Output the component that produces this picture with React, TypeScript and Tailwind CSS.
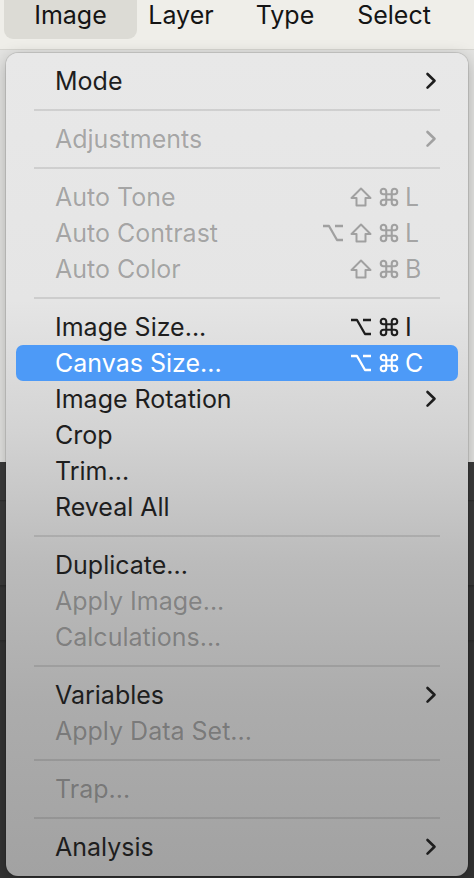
import React from 'react';
import { Command } from 'lucide-react';

type Item =
  | { kind: 'sep' }
  | {
      kind: 'item';
      label: string;
      disabled?: boolean;
      active?: boolean;
      submenu?: boolean;
      keys?: string[];
      letter?: string;
    };

const menu: Item[] = [
  { kind: 'item', label: 'Mode', submenu: true },
  { kind: 'sep' },
  { kind: 'item', label: 'Adjustments', submenu: true, disabled: true },
  { kind: 'sep' },
  { kind: 'item', label: 'Auto Tone', disabled: true, keys: ['shift', 'cmd'], letter: 'L' },
  { kind: 'item', label: 'Auto Contrast', disabled: true, keys: ['opt', 'shift', 'cmd'], letter: 'L' },
  { kind: 'item', label: 'Auto Color', disabled: true, keys: ['shift', 'cmd'], letter: 'B' },
  { kind: 'sep' },
  { kind: 'item', label: 'Image Size...', keys: ['opt', 'cmd'], letter: 'I' },
  { kind: 'item', label: 'Canvas Size...', active: true, keys: ['opt', 'cmd'], letter: 'C' },
  { kind: 'item', label: 'Image Rotation', submenu: true },
  { kind: 'item', label: 'Crop' },
  { kind: 'item', label: 'Trim...' },
  { kind: 'item', label: 'Reveal All' },
  { kind: 'sep' },
  { kind: 'item', label: 'Duplicate...' },
  { kind: 'item', label: 'Apply Image...', disabled: true },
  { kind: 'item', label: 'Calculations...', disabled: true },
  { kind: 'sep' },
  { kind: 'item', label: 'Variables', submenu: true },
  { kind: 'item', label: 'Apply Data Set...', disabled: true },
  { kind: 'sep' },
  { kind: 'item', label: 'Trap...', disabled: true },
  { kind: 'sep' },
  { kind: 'item', label: 'Analysis', submenu: true },
];

const Chevron = () => (
  <svg width="14" height="20" viewBox="0 0 14 20" className="mr-[20px]">
    <path d="M3.5 3 L10.5 9.8 L3.5 16.6" fill="none" stroke="currentColor" strokeWidth="2.6" strokeLinecap="round" strokeLinejoin="round" />
  </svg>
);

// modifier key glyphs, drawn so they don't depend on a font having them
const KeyGlyph = ({ k }: { k: string }) => {
  if (k === 'cmd') return <Command size={22} strokeWidth={2.3} />;
  if (k === 'shift')
    return (
      <svg width="22" height="20" viewBox="0 0 22 20">
        <path d="M11 1.5 L20.5 11 L15.5 11 L15.5 18.5 L6.5 18.5 L6.5 11 L1.5 11 Z" fill="none" stroke="currentColor" strokeWidth="2" strokeLinejoin="round" />
      </svg>
    );
  return (
    <svg width="22" height="20" viewBox="0 0 22 20">
      <path d="M1 3 H7 L15 17 H21 M13 3 H21" fill="none" stroke="currentColor" strokeWidth="2.3" strokeLinejoin="round" />
    </svg>
  );
};

const MenuRow = ({ item }: { item: Extract<Item, { kind: 'item' }> }) => {
  const tone = item.active
    ? 'bg-[#4d9af7] text-white'
    : item.disabled
    ? 'text-black/30'
    : 'text-[#1e1e1e]';
  return (
    <div className={`mx-[10px] h-[36px] rounded-[7px] flex items-center pl-[39px] ${tone}`}>
      <span className="flex-1 leading-none">{item.label}</span>
      {item.keys && (
        <div className="flex items-center mr-[27px]">
          {item.keys.map((k, i) => (
            <span key={i} className="w-[28px] flex justify-center">
              <KeyGlyph k={k} />
            </span>
          ))}
          <span className="ml-[2px] w-[26px] text-left leading-none">{item.letter}</span>
        </div>
      )}
      {item.submenu && <Chevron />}
    </div>
  );
};

const TopBar = () => (
  <div className="h-[50px] bg-[#efeee9] border-b border-[#d6d5d0] flex items-start text-[25px] leading-[30px] text-[#141414]">
    <div className="ml-[4px] w-[133px] h-[39px] rounded-b-[9px] bg-[#dcdbd5] flex justify-center">Image</div>
    <div className="w-[88px] flex justify-center">Layer</div>
    <div className="w-[120px] flex justify-center">Type</div>
    <div className="w-[98px] flex justify-center">Select</div>
  </div>
);

export default function App() {
  return (
    <div className="w-[474px] h-[878px] overflow-hidden font-['Inter','Noto_Sans',sans-serif] bg-[linear-gradient(to_bottom,#e3e3e1_0px,#e3e3e1_462px,#3b3b3b_462px,#3b3b3b_500px,#2c2c2c_500px,#3a3a3a_502px,#3a3a3a_585px,#2a2a2a_585px,#353535_588px,#353535_640px,#2b2b2b_640px,#333333_643px)]">
      <TopBar />
      <div className="mx-[6px] mt-[3px] h-[823px] rounded-[12px] pt-[10px] pb-[11px] text-[25px] ring-1 ring-black/10 shadow-[0_4px_16px_rgba(0,0,0,0.25)] bg-[linear-gradient(to_bottom,#e8e8e8_0%,#e5e5e5_30%,#d3d3d3_46%,#bbbbbb_62%,#acacac_79%,#a2a2a2_100%)]">
        {menu.map((item, i) =>
          item.kind === 'sep' ? (
            <div key={i} className="h-[22px] flex items-center px-[28px]">
              <div className="h-[2px] w-full bg-black/10" />
            </div>
          ) : (
            <MenuRow key={i} item={item} />
          )
        )}
      </div>
    </div>
  );
}
